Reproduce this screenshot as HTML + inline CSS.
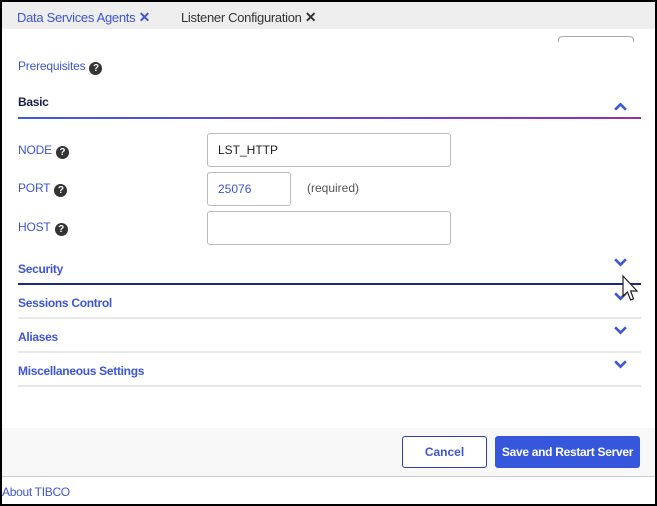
<!DOCTYPE html>
<html><head><style>
*{margin:0;padding:0;box-sizing:border-box}
body{width:657px;height:506px;background:#fff;font-family:"Liberation Sans",sans-serif;position:relative;overflow:hidden}
.frame{position:absolute;left:0;top:0;width:657px;height:506px;border:2px solid #000}
.abs{position:absolute;white-space:nowrap}
.tabs{position:absolute;left:2px;top:2px;width:653px;height:27px;background:#eee}
.q{display:inline-block;width:13px;height:13px;border-radius:50%;background:#333;color:#fff;font-size:10px;font-weight:bold;text-align:center;line-height:13px;vertical-align:-1px;margin-left:4px}
.lbl{font-size:12px;color:#3d55d6;letter-spacing:-0.2px}
.sec{font-size:12px;font-weight:bold;color:#3d55d6;letter-spacing:-0.3px}
.inp{position:absolute;border:1px solid #bbb;border-radius:3px;background:#fff;font-size:12px;padding-left:10px;line-height:32px;height:34px}
.line{position:absolute;left:18px;width:623px;height:2px;background:#e8e8e8}
.chev{position:absolute;left:613px;width:15px;height:10px}
</style></head><body>
<div class="tabs"></div>
<div class="abs" style="left:17px;top:9px;font-size:13px;color:#3d55d6;letter-spacing:-0.3px">Data Services Agents <span style="font-weight:bold;font-size:14px">✕</span></div>
<div class="abs" style="left:181px;top:9px;font-size:13px;color:#333;letter-spacing:-0.3px">Listener Configuration <span style="font-weight:bold;font-size:14px">✕</span></div>
<div class="abs" style="left:558px;top:36px;width:76px;height:6px;border:1px solid #aaa;border-bottom:none;border-radius:4px 4px 0 0"></div>
<div class="abs lbl" style="left:18px;top:59px">Prerequisites<span class="q">?</span></div>
<div class="abs sec" style="left:18px;top:95px;color:#1a1f4a">Basic</div>
<svg class="chev" style="top:102px" viewBox="0 0 14 9"><path d="M2 7L7 2L12 7" stroke="#3d55d6" stroke-width="2.4" fill="none"/></svg>
<div class="abs" style="left:18px;top:117px;width:623px;height:2px;background:linear-gradient(90deg,#3d5be0,#9a2fa8)"></div>
<div class="abs lbl" style="left:18px;top:143px">NODE<span class="q">?</span></div>
<div class="inp" style="left:207px;top:133px;width:244px;color:#222">LST_HTTP</div>
<div class="abs lbl" style="left:18px;top:181px">PORT<span class="q">?</span></div>
<div class="inp" style="left:207px;top:172px;width:84px;color:#3d55d6">25076</div>
<div class="abs" style="left:307px;top:181px;font-size:12px;color:#555">(required)</div>
<div class="abs lbl" style="left:18px;top:220px">HOST<span class="q">?</span></div>
<div class="inp" style="left:207px;top:211px;width:244px"></div>
<div class="abs sec" style="left:18px;top:262px">Security</div>
<svg class="chev" style="top:257px" viewBox="0 0 14 9"><path d="M2 2L7 7L12 2" stroke="#3d55d6" stroke-width="2.4" fill="none"/></svg>
<div class="abs" style="left:18px;top:283px;width:623px;height:2px;background:#1a2a7a"></div>
<div class="abs sec" style="left:18px;top:296px">Sessions Control</div>
<svg class="chev" style="top:291px" viewBox="0 0 14 9"><path d="M2 2L7 7L12 2" stroke="#3d55d6" stroke-width="2.4" fill="none"/></svg>
<div class="line" style="top:317px"></div>
<div class="abs sec" style="left:18px;top:330px">Aliases</div>
<svg class="chev" style="top:325px" viewBox="0 0 14 9"><path d="M2 2L7 7L12 2" stroke="#3d55d6" stroke-width="2.4" fill="none"/></svg>
<div class="line" style="top:351px"></div>
<div class="abs sec" style="left:18px;top:364px">Miscellaneous Settings</div>
<svg class="chev" style="top:359px" viewBox="0 0 14 9"><path d="M2 2L7 7L12 2" stroke="#3d55d6" stroke-width="2.4" fill="none"/></svg>
<div class="line" style="top:385px"></div>
<svg class="abs" style="left:621px;top:274px" width="20" height="30" viewBox="0 0 20 30"><path d="M2 2L2 22L6.5 18L9.5 26L12.5 24.8L9.6 17L16 17Z" fill="#fff" stroke="#222" stroke-width="1.2"/></svg>
<div class="abs" style="left:2px;top:428px;width:653px;height:49px;background:#f8f8f8;border-bottom:1px solid #ccc"></div>
<div class="abs" style="left:402px;top:436px;width:85px;height:32px;border:1px solid #2a3fb0;border-radius:3px;background:#fff;color:#3d55d6;font-size:12px;font-weight:bold;text-align:center;line-height:30px">Cancel</div>
<div class="abs" style="left:495px;top:436px;width:145px;height:32px;border-radius:3px;background:#3656dc;color:#fff;font-size:12px;font-weight:bold;text-align:center;line-height:32px;letter-spacing:-0.3px">Save and Restart Server</div>
<div class="abs" style="left:2px;top:485px;font-size:12px;color:#3d55d6;letter-spacing:-0.3px">About TIBCO</div>
<div class="frame"></div>
</body></html>
